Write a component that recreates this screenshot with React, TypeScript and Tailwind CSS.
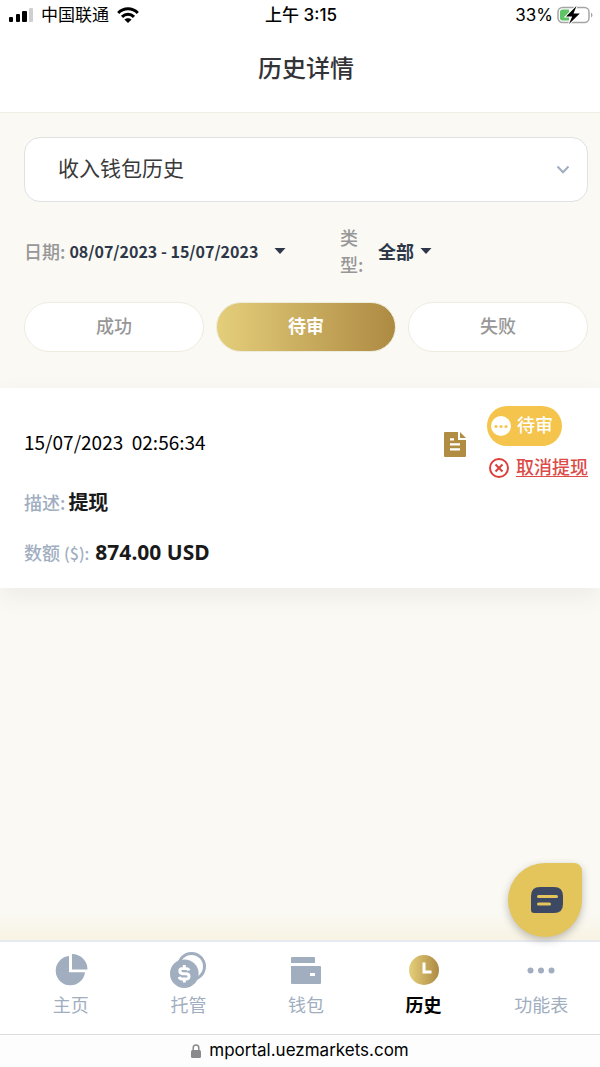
import { useState } from "react"
import type { ReactNode } from "react"
import clsx from "clsx"

// status bar
const SignalIcon = () => (
  <svg className="h-4 w-6" viewBox="0 0 24 16">
    <rect x="0" y="10" width="4" height="5" rx="1" />
    <rect x="7" y="7" width="4" height="8" rx="1" />
    <rect x="13" y="4" width="5" height="11" rx="1" />
    <rect x="20" y="1" width="4" height="14" rx="1" fill="#cfcfcf" />
  </svg>
)

const WifiIcon = () => (
  <svg className="h-4 w-[22px]" viewBox="0 0 22 16" fill="none" stroke="#000" strokeWidth="3">
    <path d="M1.2 6C6.8.4 15.2.4 20.8 6" />
    <path d="M5 9.8C8.5 6.4 13.5 6.4 17 9.8" />
    <path d="M7.4 12.6C9.5 10.7 12.5 10.7 14.6 12.6L11 16Z" fill="#000" stroke="none" />
  </svg>
)

const BatteryIcon = () => (
  <svg className="h-[18px] w-9" viewBox="0 0 36 18">
    <rect x="1" y="1.5" width="31" height="15" rx="4.5" fill="#fff" stroke="#a5a5a5" strokeWidth="1.5" />
    <path d="M5.5 3.5H12V14.5H5.5Q3 14.5 3 12V6Q3 3.5 5.5 3.5Z" fill="#5fc466" />
    <path d="M34 6.5Q35.5 7.5 35.5 9T34 11.5Z" fill="#a5a5a5" />
    <path d="M19.5 0L9 10.5H15.2L12 18L22.8 7.5H16.5Z" stroke="#fff" strokeWidth="2" paintOrder="stroke" />
  </svg>
)

const Caret = () => (
  <svg className="h-[6px] w-3" viewBox="0 0 12 6" fill="#2d3748">
    <path d="M.5 0H11.5L6.5 5.6Q6 6 5.5 5.6Z" />
  </svg>
)

const Chevron = () => (
  <svg className="mr-[17px] h-[9px] w-[14px]" viewBox="0 0 14 9" fill="none" stroke="#a0aec0" strokeWidth="2">
    <path d="M1.5 1.5L7 7.2L12.5 1.5" />
  </svg>
)

const DocumentIcon = () => (
  <svg className="h-[25px] w-[22px]" viewBox="0 0 22 25">
    <path d="M1 0H14V8H22V24Q22 25 21 25H1Q0 25 0 24V1Q0 0 1 0Z" fill="#b08d43" />
    <path d="M16 0L22 6H16Z" fill="#b08d43" />
    <path d="M6 7.3H10M6 12.3H16M6 17.3H16" stroke="#fff" strokeWidth="2.3" />
  </svg>
)

const DotsBadge = () => (
  <svg className="size-5" viewBox="0 0 20 20">
    <circle cx="10" cy="10" r="10" fill="#fff" />
    <g fill="#f6c64d">
      <circle cx="5" cy="10.5" r="1.6" />
      <circle cx="10" cy="10.5" r="1.6" />
      <circle cx="15" cy="10.5" r="1.6" />
    </g>
  </svg>
)

const CancelIcon = () => (
  <svg className="size-5" viewBox="0 0 20 20" fill="none" stroke="#dc3f3c" strokeWidth="2">
    <circle cx="10" cy="10" r="9" />
    <path d="M6.5 6.5L13.5 13.5M13.5 6.5L6.5 13.5" />
  </svg>
)

// bottom navigation
const PieIcon = () => (
  <svg className="h-8 w-[34px]" viewBox="0 0 34 32" fill="#a0aec0">
    <path d="M15 2A14.7 14.7 0 1 0 31 18.3H15Z" />
    <path d="M18 0A15.5 15.5 0 0 1 33.5 15.5H18Z" />
  </svg>
)

const CoinsIcon = () => (
  <svg className="h-9 w-9" viewBox="0 0 36 36">
    <circle cx="21.5" cy="14.5" r="13" fill="#fff" stroke="#a0aec0" strokeWidth="3" />
    <circle cx="14.3" cy="21.7" r="14.3" fill="#a0aec0" />
    <path
      d="M19 18.5Q18.2 16.5 15.5 16.5H13Q9.8 16.5 9.8 19T13 21.7H16Q19 21.7 19 24.4T16 27H12.5Q10 27 9 25M14.3 13V16M14.3 27V30.5"
      fill="none"
      stroke="#fff"
      strokeWidth="3"
    />
  </svg>
)

const WalletIcon = () => (
  <svg className="h-7 w-8" viewBox="0 0 32 28" fill="#a0aec0">
    <path d="M2 1H24Q25 1 25 2V7H1V2Q1 1 2 1Z" />
    <path fillRule="evenodd" d="M1 10H30Q31 10 31 11V27Q31 28 30 28H2Q1 28 1 27ZM20 17V20H25V17Z" />
  </svg>
)

const ClockIcon = () => (
  <svg className="size-[30px]" viewBox="0 0 30 30">
    <defs>
      <linearGradient id="clock-gold">
        <stop offset="0" stopColor="#e5cf7b" />
        <stop offset="1" stopColor="#ad8a42" />
      </linearGradient>
    </defs>
    <circle cx="15" cy="15" r="15" fill="url(#clock-gold)" />
    <path d="M15 7.5V17H22.5" fill="none" stroke="#fff" strokeWidth="3" />
  </svg>
)

const MoreIcon = () => (
  <svg className="h-[7px] w-7" viewBox="0 0 28 7" fill="#a0aec0">
    <circle cx="3.5" cy="3.5" r="3" />
    <circle cx="14" cy="3.5" r="3" />
    <circle cx="24.5" cy="3.5" r="3" />
  </svg>
)

const ChatIcon = () => (
  <svg className="h-[26px] w-8" viewBox="0 0 32 26">
    <path d="M9 0H23Q32 0 32 9V17Q32 26 23 26H3Q0 26 0 23V9Q0 0 9 0Z" fill="#3d4863" />
    <path d="M7.5 9.5H25.5M7.5 17H18.5" stroke="#e3c55c" strokeWidth="3" strokeLinecap="round" />
  </svg>
)

const LockIcon = () => (
  <svg className="h-[14px] w-[10px]" viewBox="0 0 10 14" fill="#8a8a8e">
    <rect x="0" y="6" width="10" height="8" rx="1.5" />
    <path d="M2.2 7V4A2.8 3 0 0 1 7.8 4V7" fill="none" stroke="#8a8a8e" strokeWidth="1.5" />
  </svg>
)

const STATUSES = ["成功", "待审", "失败"]

interface NavItem {
  label: string
  icon: ReactNode
  active?: boolean
}

const NAV_ITEMS: NavItem[] = [
  { label: "主页", icon: <PieIcon /> },
  { label: "托管", icon: <CoinsIcon /> },
  { label: "钱包", icon: <WalletIcon /> },
  { label: "历史", icon: <ClockIcon />, active: true },
  { label: "功能表", icon: <MoreIcon /> },
]

const StatusBar = () => (
  <div className="grid h-[30px] grid-cols-3 items-center pr-[7px] pl-[9px] font-['Inter','Noto_Sans_CJK_SC',sans-serif] text-[17px] leading-6 text-black">
    <div className="flex items-center gap-2">
      <SignalIcon />
      <span>中国联通</span>
      <WifiIcon />
    </div>
    <span className="text-center font-medium">上午 3:15</span>
    <div className="flex items-center justify-end gap-1">
      <span>33%</span>
      <BatteryIcon />
    </div>
  </div>
)

const Filters = () => {
  const [status, setStatus] = useState("待审")

  return (
    <section className="pt-6 pr-3 pb-9 pl-6">
      <div className="flex h-[65px] items-center rounded-2xl border border-[#dfe1e3] bg-white">
        <select
          aria-label="钱包"
          className="h-full min-w-0 flex-1 appearance-none pb-1 pl-[33px] text-[21px] text-[#3a3a3a] outline-none"
        >
          <option>收入钱包历史</option>
        </select>
        <Chevron />
      </div>

      <div className="mt-[22px] flex h-[54px] items-center text-lg leading-[27px] font-medium text-[#979797]">
        <div className="flex w-[316px] items-center">
          <span id="date-label">日期:</span>
          <button
            id="date-range"
            aria-labelledby="date-label date-range"
            className="ml-1 flex items-center gap-4 text-base leading-[27px] font-bold whitespace-nowrap text-[#2d3748]"
          >
            08/07/2023 - 15/07/2023
            <Caret />
          </button>
        </div>
        <label htmlFor="type" className="w-6">
          类 型:
        </label>
        <div className="ml-[14px] flex items-center gap-[6px]">
          <select id="type" className="appearance-none font-bold text-[#2d3748] outline-none">
            <option>全部</option>
          </select>
          <Caret />
        </div>
      </div>

      <div className="mt-6 grid grid-cols-3 gap-3 text-lg font-medium">
        {STATUSES.map((item) => (
          <button
            key={item}
            onClick={() => setStatus(item)}
            className={clsx(
              "h-[50px] rounded-full border border-[#eeebdf] pb-1",
              item === status
                ? "bg-linear-to-r from-[#e5cf7b] to-[#ad8a42] bg-origin-border font-bold text-white"
                : "bg-white text-[#979797]",
            )}
          >
            {item}
          </button>
        ))}
      </div>
    </section>
  )
}

const HistoryCard = () => (
  <article className="bg-white pt-[18px] pr-3 pb-[10px] pl-6 shadow-[0_8px_24px_rgba(0,0,0,0.06)]">
    <div className="flex items-center">
      <time className="flex-1 pb-1 text-[19px] whitespace-pre text-black">15/07/2023  02:56:34</time>
      <button aria-label="详情">
        <DocumentIcon />
      </button>
      <div className="ml-[21px] flex flex-col items-start text-lg font-medium">
        <span className="flex h-10 items-center gap-[6px] rounded-[20px] bg-[#f5c44c] pr-[9px] pl-1 text-white">
          <DotsBadge />
          <span className="pb-1">待审</span>
        </span>
        <a href="#cancel" className="mt-2 ml-[2px] flex items-center gap-[7px] leading-6 text-[#dc4b48]">
          <CancelIcon />
          <span className="pb-1 underline underline-offset-2">取消提现</span>
        </a>
      </div>
    </div>
    <dl className="flex flex-col gap-1 text-lg">
      <div className="flex h-10 items-center gap-[3px]">
        <dt className="font-medium text-[#a0aec0]">描述:</dt>
        <dd className="text-xl font-bold text-[#1a1a1a]">提现</dd>
      </div>
      <div className="flex h-[52px] items-center gap-[6px]">
        <dt className="font-medium text-[#a0aec0]">
          数额 <span className="text-base">($):</span>
        </dt>
        <dd className="font-['Noto_Sans',sans-serif] text-[21px] font-bold text-[#1a1a1a]">874.00 USD</dd>
      </div>
    </dl>
  </article>
)

const BottomNav = () => (
  <nav className="grid h-[94px] grid-cols-5 border-t-2 border-[#e6e9f0] bg-white pl-3 text-lg">
    {NAV_ITEMS.map(({ label, icon, active }) => (
      <a
        key={label}
        href="#nav"
        className={clsx("flex flex-col items-center pt-[10px]", active ? "font-bold text-black" : "text-[#a0aec0]")}
      >
        <span className="flex h-9 items-center">{icon}</span>
        <span className="mt-[2px] leading-7">{label}</span>
      </a>
    ))}
  </nav>
)

const App = () => {
  return (
    <div className="flex min-h-screen flex-col bg-[#faf9f4] font-['Noto_Sans_CJK_SC',sans-serif]">
      <header className="border-b border-[#f1efe5] bg-white">
        <StatusBar />
        <h1 className="pt-5 pr-3 pb-7 pl-6 text-center text-2xl leading-[34px] font-medium text-[#333338]">历史详情</h1>
      </header>

      <main className="relative flex flex-1 flex-col">
        <Filters />
        <HistoryCard />
        <div className="mt-auto h-7 bg-linear-to-b from-transparent to-[#f8f3e3]" />
        {/* floating chat button */}
        <button
          aria-label="聊天"
          className="absolute right-[18px] bottom-[3px] flex size-[74px] items-center justify-center rounded-[37px] rounded-tr-lg bg-[#e3c55c] pl-1 shadow-[0_3px_8px_rgba(0,0,0,0.25)]"
        >
          <ChatIcon />
        </button>
      </main>

      <BottomNav />
      <footer className="flex h-[33px] items-center justify-center gap-2 border-t border-[#dcdcdc] bg-[#fdfdfd] font-['Inter',sans-serif] text-[17px] text-black">
        <LockIcon />
        mportal.uezmarkets.com
      </footer>
    </div>
  )
}

export default App
